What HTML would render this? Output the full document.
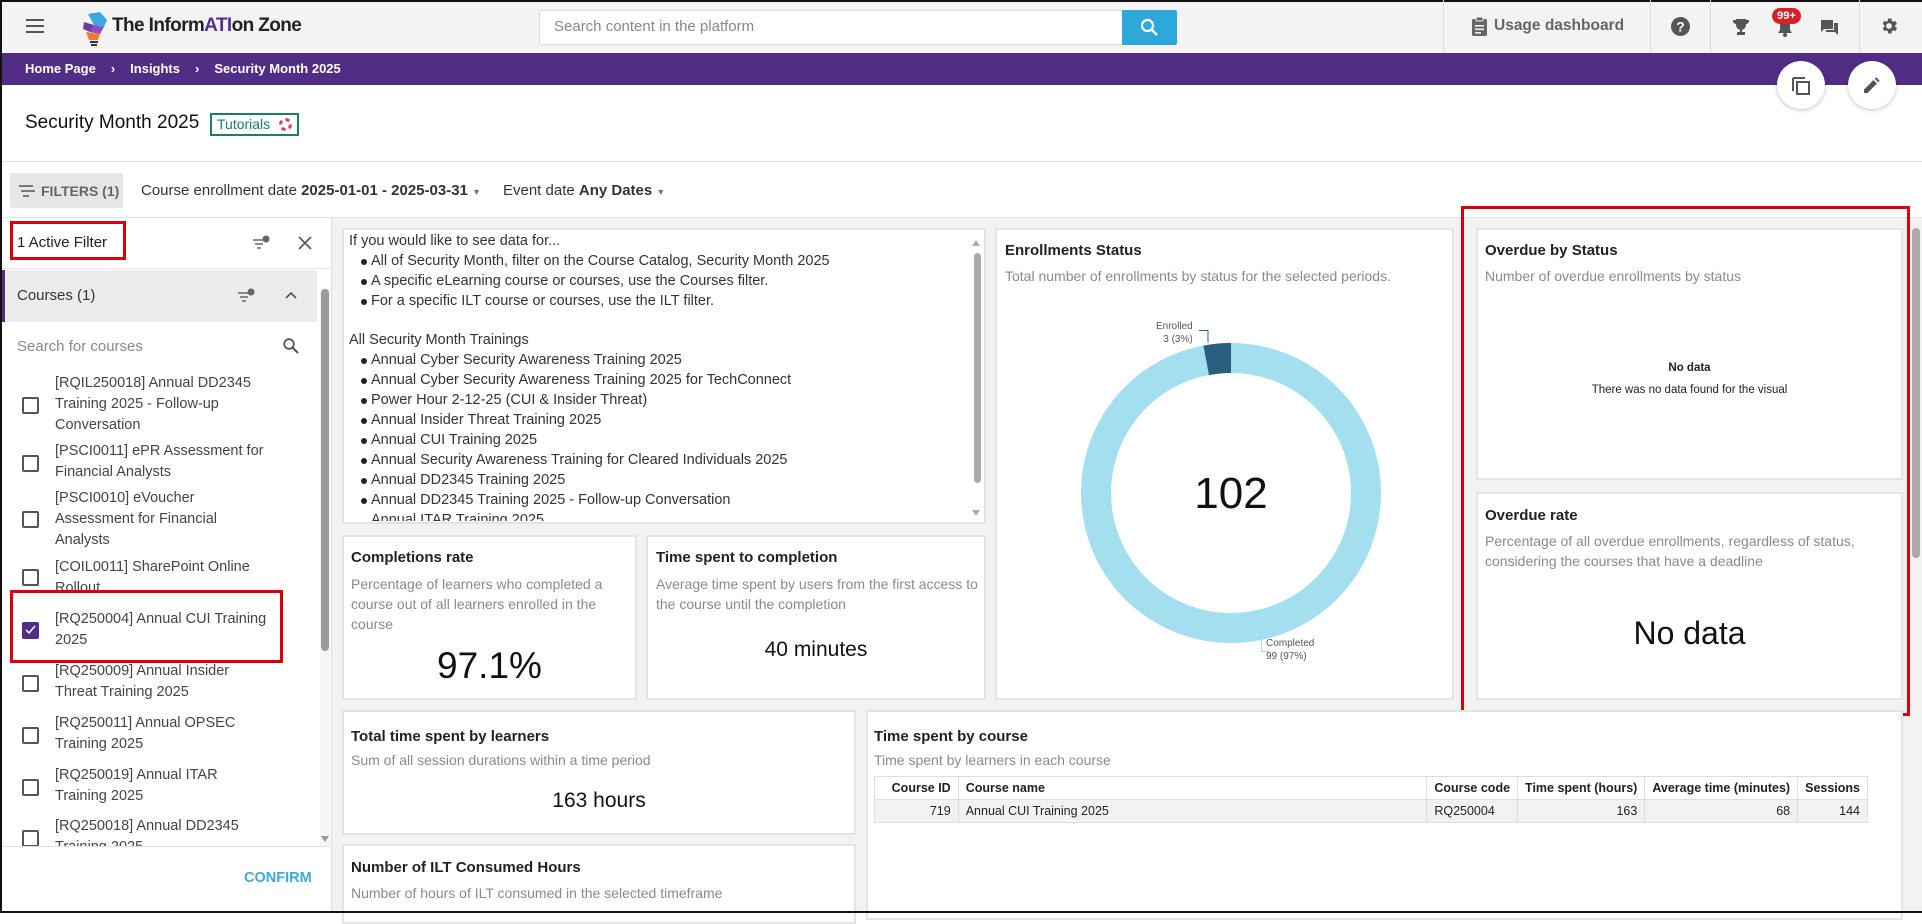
<!DOCTYPE html>
<html><head><meta charset="utf-8"><style>
*{margin:0;padding:0;box-sizing:border-box}
body{width:1922px;height:913px;overflow:hidden;position:relative;background:#fff;font-family:"Liberation Sans",sans-serif;color:#222}
.a{position:absolute}
.card{position:absolute;background:#fff;border:2px solid #e4e4e4}
.t{position:absolute;font-weight:bold;font-size:15px;color:#222;white-space:nowrap}
.d{position:absolute;font-size:14px;color:#8a8a8a;line-height:20px}
.cb{position:absolute;left:22px;width:17px;height:17px;border:2px solid #555;border-radius:2px;background:#fff}
.it{position:absolute;left:55px;font-size:14.5px;line-height:21px;color:#444;width:260px;white-space:nowrap}
.sep{position:absolute;top:0;width:1px;height:53px;background:#dcdcdc}
.tl{position:absolute;left:349px;font-size:14.5px;color:#333;white-space:nowrap}
.bl{left:371px}
.bl:before{content:"";position:absolute;left:-10px;top:6px;width:6px;height:6px;border-radius:50%;background:#222}
table{border-collapse:collapse;font-size:12.5px}
td{border:1px solid #ddd;padding:0 7px;height:23px;white-space:nowrap}
</style></head><body>
<div class="a" style="left:0;top:0;width:1922px;height:53px;background:#f3f3f3;border-top:2px solid #111"></div>
<div class="a" style="left:0;top:0;width:2px;height:913px;background:#111;z-index:5"></div>
<div class="a" style="left:0;top:911px;width:1922px;height:2px;background:#111;z-index:5"></div>
<div class="a" style="left:26px;top:19px;width:18px;height:2px;background:#555;box-shadow:0 6px 0 #555,0 12px 0 #555"></div>
<svg class="a" style="left:80px;top:10px" width="30" height="36" viewBox="0 0 30 36"><polygon points="8,4 20,2 27,10 24,17 14,15" fill="#3aa9e0"/><polygon points="4,12 14,15 10,22 3,19" fill="#6a3fa0"/><polygon points="14,15 24,17 20,24 10,22" fill="#8a4fc0"/><polygon points="6,22 20,24 18,30 9,30" fill="#f07b2d"/><rect x="10" y="31" width="8" height="2" fill="#333"/><rect x="11" y="34" width="6" height="2" fill="#333"/></svg>
<div class="a" style="left:112px;top:15px;font-family:'Liberation Sans Narrow','Liberation Sans',sans-serif;font-weight:bold;font-size:19px;color:#222;letter-spacing:-0.6px">The Inform<span style="color:#5a2d91">ATI</span>on Zone</div>
<div class="a" style="left:539px;top:10px;width:584px;height:35px;background:#fff;border:1px solid #ddd;border-radius:2px"></div>
<div class="a" style="left:554px;top:18px;font-size:15px;color:#888">Search content in the platform</div>
<div class="a" style="left:1122px;top:10px;width:55px;height:35px;background:#2ea8db;border-radius:0 2px 2px 0"></div>
<svg class="a" style="left:1140px;top:18px" width="19" height="19" viewBox="0 0 19 19"><circle cx="7.5" cy="7.5" r="5.5" stroke="#fff" stroke-width="2.2" fill="none"/><line x1="11.5" y1="11.5" x2="17" y2="17" stroke="#fff" stroke-width="2.5"/></svg>
<div class="sep" style="left:1443px"></div><div class="sep" style="left:1650px"></div><div class="sep" style="left:1710px"></div><div class="sep" style="left:1859px"></div>
<svg class="a" style="left:1472px;top:17px" width="15" height="19" viewBox="0 0 15 19"><rect x="0" y="2" width="15" height="17" rx="1.5" fill="#666"/><rect x="4" y="0" width="7" height="4" rx="1" fill="#666" stroke="#f3f3f3" stroke-width="1"/><rect x="3" y="8" width="9" height="1.6" fill="#f3f3f3"/><rect x="3" y="11.5" width="9" height="1.6" fill="#f3f3f3"/><rect x="3" y="15" width="6" height="1.6" fill="#f3f3f3"/></svg>
<div class="a" style="left:1494px;top:17px;font-size:15.5px;font-weight:bold;color:#666">Usage dashboard</div>
<svg class="a" style="left:1671px;top:17px" width="19" height="19" viewBox="0 0 19 19"><circle cx="9.5" cy="9.5" r="9.5" fill="#555"/><text x="9.5" y="14.5" font-size="14" font-weight="bold" fill="#fff" text-anchor="middle" font-family="Liberation Sans">?</text></svg>
<svg class="a" style="left:1732px;top:18px" width="18" height="18" viewBox="0 0 18 18"><path d="M4 1h10v6a5 5 0 0 1-10 0z M1 2h3v4a3 3 0 0 1-3-3z M17 2h-3v4a3 3 0 0 0 3-3z" fill="#555"/><rect x="8" y="11" width="2" height="3" fill="#555"/><rect x="5" y="14" width="8" height="3" fill="#555"/></svg>
<svg class="a" style="left:1777px;top:19px" width="16" height="18" viewBox="0 0 16 18"><path d="M8 1a5 5 0 0 0-5 5v5l-2 3h14l-2-3V6a5 5 0 0 0-5-5z" fill="#555"/><circle cx="8" cy="16" r="2" fill="#555"/></svg>
<div class="a" style="left:1772px;top:8px;width:29px;height:16px;background:#d6202b;border-radius:8px;color:#fff;font-size:11px;font-weight:bold;text-align:center;line-height:16px">99+</div>
<svg class="a" style="left:1821px;top:20px" width="17" height="16" viewBox="0 0 17 16"><path d="M0 0h12v9H3l-3 3z" fill="#555"/><path d="M13 3h4v12l-3-3H5v-2h8z" fill="#555"/></svg>
<svg class="a" style="left:1879px;top:16px" width="20" height="20" viewBox="0 0 24 24"><path fill="#555" d="M19.4 13a7.5 7.5 0 0 0 0-2l2.1-1.6-2-3.5-2.5 1a7 7 0 0 0-1.7-1L14.9 3h-4l-.4 2.9a7 7 0 0 0-1.7 1l-2.5-1-2 3.5L6.5 11a7.5 7.5 0 0 0 0 2l-2.1 1.6 2 3.5 2.5-1a7 7 0 0 0 1.7 1l.4 2.9h4l.4-2.9a7 7 0 0 0 1.7-1l2.5 1 2-3.5zM12 15.5a3.5 3.5 0 1 1 0-7 3.5 3.5 0 0 1 0 7z"/></svg>
<div class="a" style="left:0;top:53px;width:1922px;height:32px;background:#522d86"></div>
<div class="a" style="left:25px;top:61px;font-size:13px;font-weight:bold;color:#fff;white-space:nowrap">Home Page<span style="margin:0 15px">›</span>Insights<span style="margin:0 15px">›</span>Security Month 2025</div>
<div class="a" style="left:1777px;top:61px;width:48px;height:48px;border-radius:50%;background:#fff;box-shadow:0 1px 4px rgba(0,0,0,.25)"></div>
<svg class="a" style="left:1791px;top:75px" width="20" height="20" viewBox="0 0 20 20"><path d="M2 3v13" stroke="#555" stroke-width="2" fill="none"/><path d="M2 3h12" stroke="#555" stroke-width="2"/><rect x="6" y="7" width="12" height="12" stroke="#555" stroke-width="2" fill="none"/></svg>
<div class="a" style="left:1848px;top:61px;width:48px;height:48px;border-radius:50%;background:#fff;box-shadow:0 1px 4px rgba(0,0,0,.25)"></div>
<svg class="a" style="left:1863px;top:76px" width="18" height="18" viewBox="0 0 18 18"><path d="M1 13.5V17h3.5L14 7.5 10.5 4z M15.2 6.3l1.5-1.5-3.5-3.5-1.5 1.5z" fill="#555"/></svg>
<div class="a" style="left:25px;top:112px;font-size:19px;color:#111">Security Month 2025</div>
<div class="a" style="left:210px;top:113px;width:89px;height:23px;border:2px solid #1a7f64;font-size:14px;color:#1a7f64;padding:1px 0 0 5px">Tutorials</div>
<svg class="a" style="left:279px;top:118px" width="13" height="13" viewBox="0 0 13 13"><circle cx="6.5" cy="6.5" r="5" stroke="#e03a5e" stroke-width="3" fill="none" stroke-dasharray="4 3.8"/></svg>
<div class="a" style="left:0;top:161px;width:1922px;height:1px;background:#e2e2e2"></div>
<div class="a" style="left:10px;top:173px;width:113px;height:35px;background:#e6e6e6;border-radius:2px"></div>
<div class="a" style="left:19px;top:185px;width:14px;height:2px;background:#777;box-shadow:2px 5px 0 -0px #777"></div>
<div class="a" style="left:23px;top:195px;width:6px;height:2px;background:#777"></div>
<div class="a" style="left:41px;top:183px;font-size:14px;font-weight:bold;color:#666">FILTERS (1)</div>
<div class="a" style="left:141px;top:182px;font-size:15px;color:#333;white-space:nowrap">Course enrollment date <b>2025-01-01 - 2025-03-31</b> <span style="font-size:9px;color:#777">▼</span><span style="margin-left:22px">Event date <b>Any Dates</b> <span style="font-size:9px;color:#777">▼</span></span></div>
<div class="a" style="left:0;top:217px;width:1922px;height:1px;background:#e2e2e2"></div>
<div class="a" style="left:331px;top:218px;width:1px;height:695px;background:#ddd"></div>
<div class="a" style="left:10px;top:221px;width:116px;height:39px;border:3px solid #d9000d"></div>
<div class="a" style="left:17px;top:234px;font-size:15px;color:#222">1 Active Filter</div>
<svg class="a" style="left:252px;top:235px" width="19" height="16" viewBox="0 0 19 16"><path d="M1 5h10M3 9h8M5 13h4" stroke="#666" stroke-width="1.6"/><circle cx="14" cy="4" r="3.5" fill="#666"/></svg>
<svg class="a" style="left:298px;top:236px" width="14" height="14" viewBox="0 0 14 14"><path d="M1 1l12 12M13 1L1 13" stroke="#555" stroke-width="1.6"/></svg>
<div class="a" style="left:0;top:268px;width:331px;height:1px;background:#e6e6e6"></div>
<div class="a" style="left:0;top:270px;width:317px;height:52px;background:#ececec;border-left:5px solid #522d86"></div>
<div class="a" style="left:17px;top:287px;font-size:15px;color:#333">Courses (1)</div>
<svg class="a" style="left:237px;top:288px" width="19" height="16" viewBox="0 0 19 16"><path d="M1 5h10M3 9h8M5 13h4" stroke="#666" stroke-width="1.6"/><circle cx="14" cy="4" r="3.5" fill="#666"/></svg>
<svg class="a" style="left:285px;top:291px" width="12" height="8" viewBox="0 0 12 8"><path d="M1 7l5-5 5 5" stroke="#555" stroke-width="1.6" fill="none"/></svg>
<div class="a" style="left:17px;top:338px;font-size:15px;color:#888">Search for courses</div>
<svg class="a" style="left:283px;top:338px" width="16" height="16" viewBox="0 0 16 16"><circle cx="6" cy="6" r="4.8" stroke="#555" stroke-width="1.8" fill="none"/><line x1="9.5" y1="9.5" x2="15" y2="15" stroke="#555" stroke-width="2"/></svg>
<div class="a" style="left:320px;top:288px;width:10px;height:560px;background:#f5f5f5"></div>
<div class="a" style="left:321px;top:289px;width:8px;height:362px;background:#9a9a9a;border-radius:4px"></div>
<div class="a" style="left:321px;top:836px;width:0;height:0;border:4px solid transparent;border-top:6px solid #999;border-bottom:0"></div>
<div class="cb" style="top:397px"></div><div class="it" style="top:373px">[RQIL250018] Annual DD2345<br>Training 2025 - Follow-up<br>Conversation</div>
<div class="cb" style="top:455px"></div><div class="it" style="top:441px">[PSCI0011] ePR Assessment for<br>Financial Analysts</div>
<div class="cb" style="top:511px"></div><div class="it" style="top:488px">[PSCI0010] eVoucher<br>Assessment for Financial<br>Analysts</div>
<div class="cb" style="top:569px"></div><div class="it" style="top:557px;height:36px;overflow:hidden">[COIL0011] SharePoint Online<br>Rollout</div>
<div class="cb" style="top:622px;background:#522d86;border-color:#522d86"></div>
<svg class="a" style="left:25px;top:625px" width="11" height="10" viewBox="0 0 11 10"><path d="M1 5l3 3 6-7" stroke="#fff" stroke-width="1.5" fill="none"/></svg>
<div class="it" style="top:609px">[RQ250004] Annual CUI Training<br>2025</div>
<div class="a" style="left:10px;top:590px;width:273px;height:73px;border:3px solid #d9000d"></div>
<div class="cb" style="top:675px"></div><div class="it" style="top:661px">[RQ250009] Annual Insider<br>Threat Training 2025</div>
<div class="cb" style="top:727px"></div><div class="it" style="top:713px">[RQ250011] Annual OPSEC<br>Training 2025</div>
<div class="cb" style="top:779px"></div><div class="it" style="top:765px">[RQ250019] Annual ITAR<br>Training 2025</div>
<div class="cb" style="top:830px"></div><div class="it" style="top:816px;height:30px;overflow:hidden">[RQ250018] Annual DD2345<br>Training 2025</div>
<div class="a" style="left:0;top:846px;width:331px;height:67px;background:#fff;border-top:1px solid #e2e2e2"></div>
<div class="a" style="left:244px;top:870px;font-size:14.5px;font-weight:bold;color:#3fa9d6">CONFIRM</div>
<div class="a" style="left:332px;top:218px;width:1590px;height:693px;background:#f2f2f2"></div>
<div class="card" style="left:342px;top:228px;width:644px;height:296px;overflow:hidden">
<div class="a" style="right:4px;top:10px;border:4px solid transparent;border-bottom:6px solid #aaa;border-top:0"></div>
<div class="a" style="right:3px;top:23px;width:7px;height:230px;background:#aaa;border-radius:4px"></div>
<div class="a" style="right:4px;top:280px;border:4px solid transparent;border-top:6px solid #aaa;border-bottom:0"></div>
</div>
<div class="tl" style="top:233px">If you would like to see data for...</div>
<div class="tl bl" style="top:253px">All of Security Month, filter on the Course Catalog, Security Month 2025</div>
<div class="tl bl" style="top:273px">A specific eLearning course or courses, use the Courses filter.</div>
<div class="tl bl" style="top:293px">For a specific ILT course or courses, use the ILT filter.</div>
<div class="tl" style="top:332px">All Security Month Trainings</div>
<div class="tl bl" style="top:352px">Annual Cyber Security Awareness Training 2025</div>
<div class="tl bl" style="top:372px">Annual Cyber Security Awareness Training 2025 for TechConnect</div>
<div class="tl bl" style="top:392px">Power Hour 2-12-25 (CUI &amp; Insider Threat)</div>
<div class="tl bl" style="top:412px">Annual Insider Threat Training 2025</div>
<div class="tl bl" style="top:432px">Annual CUI Training 2025</div>
<div class="tl bl" style="top:452px">Annual Security Awareness Training for Cleared Individuals 2025</div>
<div class="tl bl" style="top:472px">Annual DD2345 Training 2025</div>
<div class="tl bl" style="top:492px">Annual DD2345 Training 2025 - Follow-up Conversation</div>
<div class="tl bl" style="top:512px;height:9px;overflow:hidden">Annual ITAR Training 2025</div>
<div class="card" style="left:342px;top:535px;width:295px;height:165px"></div>
<div class="t" style="left:351px;top:549px">Completions rate</div>
<div class="d" style="left:351px;top:574px;width:270px">Percentage of learners who completed a course out of all learners enrolled in the course</div>
<div class="a" style="left:342px;width:295px;text-align:center;top:645px;font-size:37px;color:#111">97.1%</div>
<div class="card" style="left:646px;top:535px;width:340px;height:165px"></div>
<div class="t" style="left:656px;top:549px">Time spent to completion</div>
<div class="d" style="left:656px;top:574px;width:325px">Average time spent by users from the first access to the course until the completion</div>
<div class="a" style="left:646px;width:340px;text-align:center;top:638px;font-size:21px;color:#111">40 minutes</div>
<div class="card" style="left:995px;top:228px;width:459px;height:472px"></div>
<div class="t" style="left:1005px;top:242px">Enrollments Status</div>
<div class="d" style="left:1005px;top:266px;white-space:nowrap">Total number of enrollments by status for the selected periods.</div>
<svg class="a" style="left:1071px;top:333px" width="320" height="320" viewBox="0 0 320 320">
<circle cx="160" cy="160" r="135" fill="none" stroke="#a3dfef" stroke-width="30"/>
<path d="M160 10 A150 150 0 0 0 132.4 12.6 L138 42.1 A120 120 0 0 1 160 40 Z" fill="#2b5f7f"/>
<text x="160" y="175" font-size="44" text-anchor="middle" fill="#111" font-family="Liberation Sans">102</text>
</svg>
<div class="a" style="left:1156px;top:320px;font-size:10px;color:#555;text-align:right;line-height:13px">Enrolled<br>3 (3%)</div>
<svg class="a" style="left:1199px;top:330px" width="30" height="15"><path d="M0 .5h9v12" stroke="#2b5f7f" fill="none"/></svg>
<div class="a" style="left:1261px;top:640px;width:8px;height:12px;border-left:1px solid #a3dfef;border-bottom:1px solid #a3dfef"></div>
<div class="a" style="left:1266px;top:637px;font-size:10px;color:#555;line-height:13px">Completed<br>99 (97%)</div>
<div class="card" style="left:1476px;top:228px;width:427px;height:252px"></div>
<div class="t" style="left:1485px;top:242px">Overdue by Status</div>
<div class="d" style="left:1485px;top:266px">Number of overdue enrollments by status</div>
<div class="a" style="left:1476px;width:427px;text-align:center;top:362px;font-size:11.5px;font-weight:bold;color:#222">No data</div>
<div class="a" style="left:1476px;width:427px;text-align:center;top:384px;font-size:11.5px;color:#222">There was no data found for the visual</div>
<div class="card" style="left:1476px;top:492px;width:427px;height:208px"></div>
<div class="t" style="left:1485px;top:507px">Overdue rate</div>
<div class="d" style="left:1485px;top:531px;width:400px">Percentage of all overdue enrollments, regardless of status, considering the courses that have a deadline</div>
<div class="a" style="left:1476px;width:427px;text-align:center;top:615px;font-size:32px;color:#111">No data</div>
<div class="a" style="left:1461px;top:206px;width:449px;height:510px;border:3px solid #d9000d"></div>
<div class="a" style="left:1912px;top:228px;width:8px;height:330px;background:#aaa;border-radius:4px"></div>
<div class="card" style="left:342px;top:710px;width:514px;height:125px"></div>
<div class="t" style="left:351px;top:728px">Total time spent by learners</div>
<div class="d" style="left:351px;top:750px">Sum of all session durations within a time period</div>
<div class="a" style="left:342px;width:514px;text-align:center;top:789px;font-size:21px;color:#111">163 hours</div>
<div class="card" style="left:342px;top:844px;width:514px;height:80px"></div>
<div class="t" style="left:351px;top:859px">Number of ILT Consumed Hours</div>
<div class="d" style="left:351px;top:883px">Number of hours of ILT consumed in the selected timeframe</div>
<div class="card" style="left:866px;top:710px;width:1037px;height:210px"></div>
<div class="t" style="left:874px;top:728px">Time spent by course</div>
<div class="d" style="left:874px;top:750px">Time spent by learners in each course</div>
<table class="a" style="left:874px;top:776px;width:994px">
<tr style="font-weight:bold;background:#fff"><td style="width:84px;text-align:right">Course ID</td><td style="width:478px">Course name</td><td style="width:87px">Course code</td><td style="width:126px;text-align:right">Time spent (hours)</td><td style="width:151px;text-align:right">Average time (minutes)</td><td style="text-align:right">Sessions</td></tr>
<tr style="background:#f2f2f2"><td style="text-align:right">719</td><td>Annual CUI Training 2025</td><td>RQ250004</td><td style="text-align:right">163</td><td style="text-align:right">68</td><td style="text-align:right">144</td></tr>
</table>
</body></html>
